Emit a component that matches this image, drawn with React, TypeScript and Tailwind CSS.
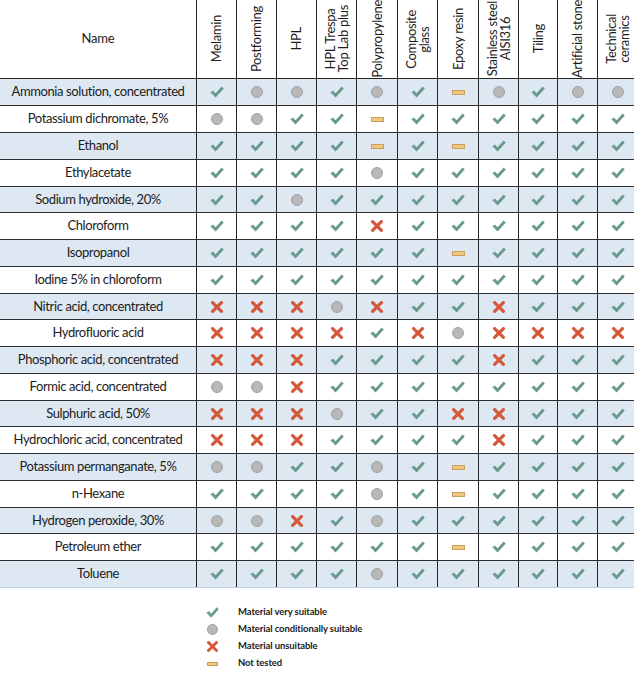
import React from "react";

const cols: string[][] = [
  ["Melamin"],
  ["Postforming"],
  ["HPL"],
  ["HPL Trespa", "Top Lab plus"],
  ["Polypropylene"],
  ["Composite", "glass"],
  ["Epoxy resin"],
  ["Stainless steel", "AISI316"],
  ["Tiling"],
  ["Artificial stone"],
  ["Technical", "ceramics"],
];

const rows: [string, string][] = [
  ["Ammonia solution, concentrated", "VOOVOV-OVOO"],
  ["Potassium dichromate, 5%", "OOVV-VVVVVV"],
  ["Ethanol", "VVVV-V-VVVV"],
  ["Ethylacetate", "VVVVOVVVVVV"],
  ["Sodium hydroxide, 20%", "VVOVVVVVVVV"],
  ["Chloroform", "VVVVXVVVVVV"],
  ["Isopropanol", "VVVVVV-VVVV"],
  ["Iodine  5% in chloroform", "VVVVVVVVVVV"],
  ["Nitric acid, concentrated", "XXXOXVVXVVV"],
  ["Hydrofluoric acid", "XXXXVXOXXXX"],
  ["Phosphoric acid, concentrated", "XXXVVVVXVVV"],
  ["Formic acid, concentrated", "OOXVVVVVVVV"],
  ["Sulphuric acid, 50%", "XXXOVVXXVVV"],
  ["Hydrochloric acid, concentrated", "XXXVVVVXVVV"],
  ["Potassium permanganate, 5%", "OOVVOV-VVVV"],
  ["n-Hexane", "VVVVOV-VVVV"],
  ["Hydrogen peroxide, 30%", "OOXVOVVVVVV"],
  ["Petroleum ether", "VVVVVV-VVVV"],
  ["Toluene", "VVVVOVVVVVV"],
];

const heights = [
  "h-[27px]", "h-[27px]", "h-[27px]", "h-[27px]", "h-[26px]",
  "h-[27px]", "h-[27px]", "h-[27px]", "h-[26px]", "h-[27px]",
  "h-[27px]", "h-[27px]", "h-[26px]", "h-[27px]", "h-[27px]",
  "h-[27px]", "h-[26px]", "h-[27px]", "h-[27px]",
];

const gridCols =
  "grid grid-cols-[197px_40px_40px_40px_40px_41px_40px_41px_40px_39px_40px_40px]";

function Check({ small }: { small?: boolean }) {
  const w = small ? 13 : 14;
  const h = small ? 11 : 12;
  return (
    <svg width={w} height={h} viewBox="0 0 14 12">
      <defs>
        <linearGradient id="cg" x1="0" y1="0" x2="1" y2="1">
          <stop offset="0" stopColor="#7aa99b" />
          <stop offset="1" stopColor="#5a8d7e" />
        </linearGradient>
      </defs>
      <polygon points="0.3,6.2 3,4.4 5.6,7.3 11.6,0.4 13.8,2.4 5.6,11.6" fill="url(#cg)" />
    </svg>
  );
}

function Circle({ small }: { small?: boolean }) {
  return (
    <div
      className={
        small
          ? "w-[11px] h-[11px] rounded-full bg-[#b8b8b8] border border-[#a2a2a2]"
          : "w-[12px] h-[12px] rounded-full bg-[#b8b8b8] border border-[#a2a2a2]"
      }
    />
  );
}

function Cross({ small }: { small?: boolean }) {
  const s = small ? 11 : 12;
  return (
    <svg width={s} height={s} viewBox="0 0 12 12">
      <line x1="1.6" y1="1.6" x2="10.4" y2="10.4" stroke="#d6583b" strokeWidth="3.2" strokeLinecap="round" />
      <line x1="10.4" y1="1.6" x2="1.6" y2="10.4" stroke="#d6583b" strokeWidth="3.2" strokeLinecap="round" />
    </svg>
  );
}

function Dash({ small }: { small?: boolean }) {
  return (
    <div
      className={
        small
          ? "w-[11px] h-[4px] bg-[#efc680] border border-[#c9a05a]"
          : "w-[13px] h-[5px] bg-[#efc680] border border-[#c9a05a]"
      }
    />
  );
}

function Sym({ c }: { c: string }) {
  if (c === "V") return <Check />;
  if (c === "O") return <Circle />;
  if (c === "X") return <Cross />;
  return <Dash />;
}

export default function App() {
  return (
    <div className="w-[634px] h-[674px] bg-white overflow-hidden font-['Lato',sans-serif] text-[#1c1c1c]">
      <div className="w-[634px] overflow-hidden">
        {/* header */}
        <div className={`${gridCols} h-[79px] border-b border-[#262626]`}>
          <div className="border-r border-[#262626] flex items-center justify-center text-[13px] tracking-[-0.2px]">
            Name
          </div>
          {cols.map((c, i) => (
            <div
              key={i}
              className="border-r border-[#262626] flex items-center justify-center overflow-hidden"
            >
              <span className="[writing-mode:vertical-rl] rotate-180 text-center text-[13px] leading-[13px] tracking-[-0.3px] whitespace-nowrap">
                {c.map((l, j) => (
                  <React.Fragment key={j}>
                    {j > 0 && <br />}
                    {l}
                  </React.Fragment>
                ))}
              </span>
            </div>
          ))}
        </div>
        {/* rows */}
        {rows.map(([name, vals], r) => {
          const last = r === rows.length - 1;
          const bg = r % 2 === 0 ? "bg-[#dde8f3]" : "bg-white";
          const bb = last ? "border-b border-[#b9cde3]" : "border-b border-[#2e2e2e]";
          return (
            <div key={r} className={`${gridCols} ${heights[r]} ${bg} ${bb}`}>
              <div className="border-r border-[#262626] flex items-center justify-center text-[13px] tracking-[-0.4px] whitespace-nowrap">
                {name}
              </div>
              {vals.split("").map((v, i) => (
                <div key={i} className="border-r border-[#262626] flex items-center justify-center">
                  <Sym c={v} />
                </div>
              ))}
            </div>
          );
        })}
      </div>
      {/* legend */}
      <div className="ml-[204px] mt-[18px] flex flex-col gap-[4px] text-[9.5px] font-bold tracking-[-0.1px] text-[#1c1c1c]">
        <div className="flex items-center h-[13px]">
          <div className="w-[34px] flex justify-center pr-[18px]">
            <Check small />
          </div>
          <span>Material very suitable</span>
        </div>
        <div className="flex items-center h-[13px]">
          <div className="w-[34px] flex justify-center pr-[18px]">
            <Circle small />
          </div>
          <span>Material conditionally suitable</span>
        </div>
        <div className="flex items-center h-[13px]">
          <div className="w-[34px] flex justify-center pr-[18px]">
            <Cross small />
          </div>
          <span>Material unsuitable</span>
        </div>
        <div className="flex items-center h-[13px]">
          <div className="w-[34px] flex justify-center pr-[18px]">
            <Dash small />
          </div>
          <span>Not tested</span>
        </div>
      </div>
    </div>
  );
}
